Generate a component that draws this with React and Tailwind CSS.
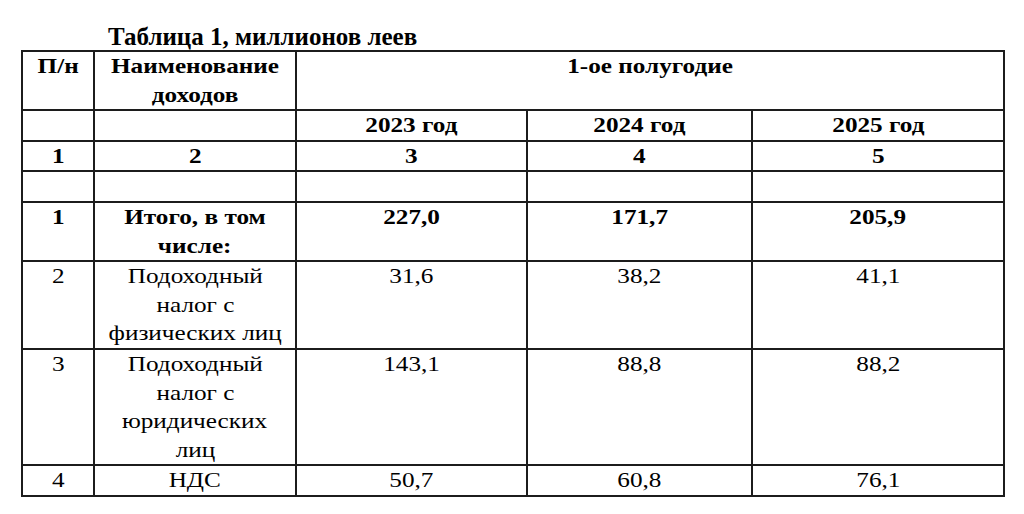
const rows = [
  { n: "1", name: ["Итого, в том", "числе:"], v: ["227,0", "171,7", "205,9"], bold: true },
  { n: "2", name: ["Подоходный", "налог с", "физических лиц"], v: ["31,6", "38,2", "41,1"] },
  { n: "3", name: ["Подоходный", "налог с", "юридических", "лиц"], v: ["143,1", "88,8", "88,2"] },
  { n: "4", name: ["НДС"], v: ["50,7", "60,8", "76,1"] },
];

const cell = "border-2 border-[#1c1c1c] p-0 align-top text-center";

// текст в исходнике шире обычного Times, растягиваем по горизонтали
const T = ({ children }) => (
  <span className="inline-block scale-x-[1.2] whitespace-nowrap">{children}</span>
);

const App = () => {
  return (
    <div className="w-[1024px] h-[514px] bg-white text-black pl-[21px] pt-[24px] font-['Liberation_Serif','Times_New_Roman',serif]">
      {/* Заголовок таблицы */}
      <div className="ml-[87px] h-[26px] text-[25px] leading-[26px] font-bold">Таблица 1, миллионов леев</div>

      <table className="table-fixed border-collapse text-[21px] leading-[28.6px]">
        <colgroup>
          <col className="w-[72px]" />
          <col className="w-[202px]" />
          <col className="w-[231px]" />
          <col className="w-[225px]" />
          <col className="w-[252px]" />
        </colgroup>
        <tbody>
          <tr className="font-bold">
            <td className={cell}><T>П/н</T></td>
            <td className={cell}>
              <div><T>Наименование</T></div>
              <div><T>доходов</T></div>
            </td>
            <td className={cell} colSpan={3}><T>1-ое полугодие</T></td>
          </tr>
          <tr className="font-bold">
            <td className={cell}>&nbsp;</td>
            <td className={cell}></td>
            <td className={cell}><T>2023 год</T></td>
            <td className={cell}><T>2024 год</T></td>
            <td className={cell}><T>2025 год</T></td>
          </tr>
          <tr className="font-bold">
            <td className={cell}><T>1</T></td>
            <td className={cell}><T>2</T></td>
            <td className={cell}><T>3</T></td>
            <td className={cell}><T>4</T></td>
            <td className={cell}><T>5</T></td>
          </tr>
          <tr>
            <td className={cell}>&nbsp;</td>
            <td className={cell}></td>
            <td className={cell}></td>
            <td className={cell}></td>
            <td className={cell}></td>
          </tr>
          {rows.map((r) => (
            <tr key={r.n} className={r.bold ? "font-bold" : ""}>
              <td className={cell}><T>{r.n}</T></td>
              <td className={cell}>
                {r.name.map((line, i) => (
                  <div key={i}><T>{line}</T></div>
                ))}
              </td>
              {r.v.map((val, i) => (
                <td key={i} className={cell}><T>{val}</T></td>
              ))}
            </tr>
          ))}
        </tbody>
      </table>
    </div>
  );
};

export default App;
